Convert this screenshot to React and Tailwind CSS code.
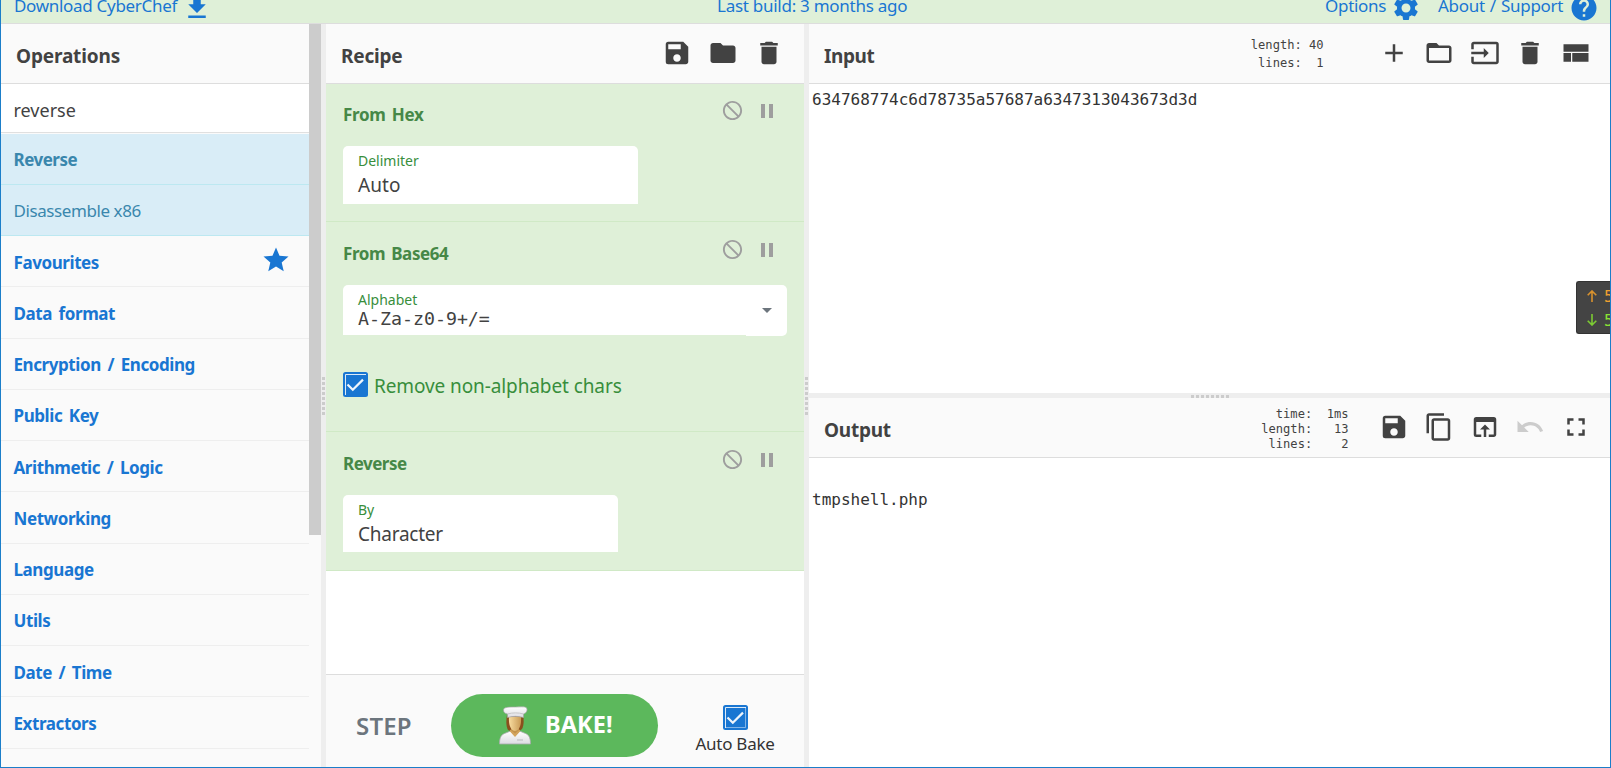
import React, { useState } from 'react';
import clsx from 'clsx';
import {
  MdSave, MdFolder, MdDelete, MdAdd, MdInput, MdContentCopy,
  MdOpenInBrowser, MdUndo, MdFullscreen, MdSettings, MdHelp, MdStar, MdPause,
} from 'react-icons/md';

const categories = [
  'Favourites', 'Data format', 'Encryption / Encoding', 'Public Key', 'Arithmetic / Logic',
  'Networking', 'Language', 'Utils', 'Date / Time', 'Extractors',
];

function Glyph({ d, className }) {
  return (
    <svg viewBox="0 0 24 24" fill="currentColor" className={clsx('shrink-0', className)}>
      <path d={d} />
    </svg>
  );
}

const DOWNLOAD = 'M19 9h-4V3H9v6H5l7 7 7-7zM5 18v2h14v-2H5z';
const FOLDER_OUTLINE = 'M20 6h-8l-2-2H4c-1.1 0-1.99.9-1.99 2L2 18c0 1.1.9 2 2 2h16c1.1 0 2-.9 2-2V8c0-1.1-.9-2-2-2zm0 12H4V8h16v10z';
const LAYOUT = 'M2 19h6v-7H2v7zm7 0h13v-7H9v7zM2 5v6h20V5H2z';
const BLOCK = 'M12 2C6.48 2 2 6.48 2 12s4.48 10 10 10 10-4.48 10-10S17.52 2 12 2zm0 18c-4.42 0-8-3.58-8-8 0-1.85.63-3.55 1.69-4.9L16.9 18.31C15.55 19.37 13.85 20 12 20zm6.31-3.1L7.1 5.69C8.45 4.63 10.15 4 12 4c4.42 0 8 3.58 8 8 0 1.85-.63 3.55-1.69 4.9z';

function Checkbox({ checked, onChange, closed }) {
  return (
    <button onClick={() => onChange(!checked)} className="block w-[25px] h-[25px] shrink-0">
      <svg viewBox="0 0 25 25" className="block w-full h-full">
        <rect width="25" height="25" rx="2.5" fill="#1976d2" />
        <path d="M2.5 23V2.5H23" fill="none" stroke="#fff" strokeWidth="1" opacity=".85" />
        {closed && <path d="M2.5 22.5h20v-20" fill="none" stroke="#fff" strokeWidth="1" opacity=".45" />}
        {checked && <path d="M4.5 12.5l5.3 5.3L20 7.6" fill="none" stroke="#fff" strokeWidth="2.2" opacity=".93" />}
      </svg>
    </button>
  );
}

function Chef() {
  return (
    <svg viewBox="0 0 32 39" className="w-8 h-[39px] shrink-0 -mt-px">
      <defs>
        <linearGradient id="coat" x1="0" y1="0" x2="0" y2="1">
          <stop offset="0" stopColor="#fff" />
          <stop offset="1" stopColor="#dcdce2" />
        </linearGradient>
        <linearGradient id="face" x1="0" y1="0" x2="1" y2="0">
          <stop offset="0" stopColor="#f8dca0" />
          <stop offset="1" stopColor="#c99a55" />
        </linearGradient>
      </defs>
      <path d="M8 9c-1 6-1 11 1 15l5 2h5l4-3c2-4 2-9 1-14z" fill="#8a4f1d" />
      <path d="M12 20h8v8l-4 4-4-4z" fill="#c4934d" />
      <path d="M.5 38c0-5 1-9 5-10.500l6-2.500 4.500 5 4.500-5 6 2.500c4 1.500 5 5.500 5 10.500z" fill="url(#coat)" stroke="#a9a9ad" strokeWidth=".8" />
      <path d="M11 25.500l5 5.500 5-5.500v-2l-5 4-5-4z" fill="#d3a45e" />
      <path d="M10 11h12c.5 7-1 13-6 14-5-1-6.500-7-6-14z" fill="url(#face)" />
      <path d="M18 34h6" stroke="#b9b9be" strokeWidth="1" />
      <path d="M4.500 4c0-3 6-3 12-3s11-1 11.500 2-2 4.500-3.500 5v3.500c-5-1.500-11-1.500-16 0V8C6 7.500 4.500 6.500 4.500 4z" fill="url(#coat)" stroke="#a5a5a5" strokeWidth=".7" />
      <path d="M8.500 8c5-1.500 11-1.500 16 0" stroke="#bdbdbd" strokeWidth=".8" fill="none" />
    </svg>
  );
}

function Gutter({ horizontal }) {
  return (
    <div className={clsx('shrink-0 bg-[#eee] flex items-center justify-center', horizontal ? 'h-[5px] pt-[2px]' : 'w-[5px] flex-col pt-px')}>
      <div className={clsx('flex gap-[2px]', !horizontal && 'flex-col')}>
        {Array.from({ length: 8 }, (_, i) => (
          <span key={i} className="block w-[3px] h-[3px] bg-[#ccc]" />
        ))}
      </div>
    </div>
  );
}

function PaneHeader({ title, titleClass, stats, children }) {
  return (
    <div className="h-[60px] shrink-0 bg-[#fafafa] border-b border-[#ddd] flex items-center pl-[15px] text-[#424242]">
      <h2 className={clsx('text-[19px] leading-6 font-bold pt-[5px] flex-1', titleClass)}>{title}</h2>
      {stats}
      <div className="flex items-center pb-[1px]">{children}</div>
    </div>
  );
}

function Operation({ name, nameClass, className, headClass, children }) {
  return (
    <div className={clsx('bg-[#dff0d8] border-b border-[#d0e9c6] px-[17px]', className)}>
      <div className={clsx('flex', headClass)}>
        <h3 className={clsx('flex-1 text-[17px] leading-8 font-bold text-[#468847]', nameClass)}>{name}</h3>
        <div className="flex items-center h-[23px] gap-[11px] pr-[8px] text-[#9e9e9e]">
          <Glyph d={BLOCK} className="w-[23px] h-[23px]" />
          <MdPause className="w-[24px] h-[24px]" />
        </div>
      </div>
      {children}
    </div>
  );
}

function App() {
  const [query, setQuery] = useState('reverse');
  const [strip, setStrip] = useState(true);
  const [autoBake, setAutoBake] = useState(true);

  return (
    <div className="w-[1611px] h-[768px] overflow-hidden relative flex flex-col border-x border-b border-[#1b7ec9] bg-white font-['Noto_Sans',sans-serif] text-[#424242]">
      {/* Banner */}
      <header className="h-6 shrink-0 overflow-hidden bg-[#dff0d8] border-b border-[#ddd] text-[#1976d2] text-[17px]">
        <div className="h-10 -mt-3 flex items-center justify-between pl-[13px] pr-[11px]">
          <div className="flex items-center w-[600px] gap-[4px]">
            <span className="w-[164px] whitespace-nowrap tracking-[-0.3px] -mt-[5px]">Download CyberChef</span>
            <Glyph d={DOWNLOAD} className="w-[30px] h-[30px]" />
          </div>
          <span className="whitespace-nowrap w-[190px] ml-[11px] tracking-[-0.27px] -mt-[5px]">Last build: 3 months ago</span>
          <div className="flex items-center justify-end w-[600px]">
            <span className="whitespace-nowrap w-[63px] tracking-[-0.3px] -mt-[5px]">Options</span>
            <MdSettings className="w-[30px] h-[30px] mr-[17px] ml-[3px] shrink-0" />
            <span className="whitespace-nowrap w-[128px] tracking-[-0.3px] [word-spacing:1px] -mt-[5px]">About / Support</span>
            <MdHelp className="w-[30px] h-[30px] ml-[3px] shrink-0" />
          </div>
        </div>
      </header>

      <main className="flex-1 min-h-0 flex">
        {/* Operations */}
        <section className="w-[320px] shrink-0 flex bg-[#fafafa] overflow-hidden">
          <div className="w-[308px]">
            <PaneHeader title="Operations" titleClass="tracking-[-0.15px]" />
            <input
              value={query}
              onChange={(e) => setQuery(e.target.value)}
              className="block w-full h-[49px] bg-white border-b border-[#e0e0e0] pl-[12.5px] pt-[3px] text-[18px] tracking-[0px] outline-none"
            />
            <ul className="pt-[0.65px] text-[17px]">
              <li className="h-[51.25px] pl-[12.5px] pt-[2px] flex items-center bg-[#d9edf7] border-b border-[#bce8f1] text-[#3a87ad] font-bold tracking-[-0.5px]">Reverse</li>
              <li className="h-[51.25px] pl-[12.5px] pt-px flex items-center bg-[#d9edf7] border-b border-[#bce8f1] text-[#3a87ad] tracking-[-0.42px]">Disassemble x86</li>
              {categories.map((name) => (
                <li key={name} className="h-[51.25px] pl-[12.5px] pr-[18px] flex items-center justify-between border-b border-[#eee] text-[#1976d2] font-bold tracking-[-0.42px] [word-spacing:2.6px]">
                  <span className="pt-[2px]">{name}</span>
                  {name === 'Favourites' && <MdStar className="w-[30px] h-[30px] -mt-[2px]" />}
                </li>
              ))}
            </ul>
          </div>
          <div className="w-3 h-[511px] bg-[#ccc]" />
        </section>
        <Gutter />

        {/* Recipe */}
        <section className="w-[478px] shrink-0 flex flex-col bg-white">
          <PaneHeader title="Recipe" titleClass="tracking-[-0.2px]">
            <div className="flex gap-4 pr-5">
              <MdSave className="w-[30px] h-[30px]" />
              <MdFolder className="w-[30px] h-[30px]" />
              <MdDelete className="w-[30px] h-[30px]" />
            </div>
          </PaneHeader>
          <div className="flex-1">
            <Operation name="From Hex" nameClass="tracking-[-0.3px] [word-spacing:2px]" headClass="h-[62px] pt-[15px]" className="h-[138px]">
              <div className="w-[295px] h-[58px] bg-white rounded-t-[5px] pl-[15px] pt-[5px]">
                <div className="text-[14px] leading-5 text-[#388e3c] tracking-[0px]">Delimiter</div>
                <div className="text-[19px] leading-[29px] tracking-[0.1px]">Auto</div>
              </div>
            </Operation>
            <Operation name="From Base64" nameClass="tracking-[-0.4px] [word-spacing:2px]" headClass="h-[63px] pt-[16px]" className="h-[210px]">
              <div className="flex">
                <div className="flex-1 h-[50px] bg-white rounded-tl-[5px] pl-[15px] pt-[5px]">
                  <div className="text-[14px] leading-5 text-[#388e3c] tracking-[0px]">Alphabet</div>
                  <div className="font-['DejaVu_Sans_Mono',monospace] text-[18.25px] leading-[18px]">A-Za-z0-9+/=</div>
                </div>
                <div className="w-[41px] h-[51px] bg-white rounded-r-[5px] flex items-center justify-center">
                  <span className="border-x-[5.5px] border-x-transparent border-t-[5.5px] border-t-[#6c757d]" />
                </div>
              </div>
              <div className="flex items-start gap-[6px] mt-9">
                <Checkbox checked={strip} onChange={setStrip} />
                <span className="text-[19px] leading-[25px] pt-[2px] text-[#388e3c] tracking-[-0.1px]">Remove non-alphabet chars</span>
              </div>
            </Operation>
            <Operation name="Reverse" nameClass="tracking-[-0.5px]" headClass="h-[63px] pt-[16px]" className="h-[139px]">
              <div className="w-[275px] h-[57px] bg-white rounded-t-[5px] pl-[15px] pt-[5px]">
                <div className="text-[14px] leading-5 text-[#388e3c] tracking-[-0.2px]">By</div>
                <div className="text-[19px] leading-[29px] tracking-[-0.25px]">Character</div>
              </div>
            </Operation>
          </div>
          <div className="h-[93px] shrink-0 bg-[#fafafa] border-t border-[#ddd] flex items-start">
            <button className="w-[125px] pl-[30px] pt-[33px] text-left text-[24px] leading-9 font-semibold text-[#6c757d] tracking-[0.2px]">STEP</button>
            <button className="w-[207px] h-[63px] mt-[19px] rounded-full bg-[#5cb85c] text-white flex items-center pl-12 gap-[14px]">
              <Chef />
              <span className="text-[23.5px] leading-8 font-bold tracking-[0.1px] -mt-[4px]">BAKE!</span>
            </button>
            <div className="ml-[37px] pt-[30px] flex flex-col items-center w-[80px]">
              <Checkbox checked={autoBake} onChange={setAutoBake} closed />
              <span className="text-[17px] leading-6 mt-[2px] whitespace-nowrap tracking-[-0.25px] text-[#333]">Auto Bake</span>
            </div>
          </div>
        </section>
        <Gutter />

        {/* Input / Output */}
        <section className="flex-1 min-w-0 flex flex-col">
          <PaneHeader
            title="Input"
            titleClass="tracking-[-0.4px]"
            stats={<pre className="w-[90px] mr-[55px] text-right font-['DejaVu_Sans_Mono',monospace] text-[12.1px] leading-[18px] pt-px">{'length: 40\nlines:  1'}</pre>}
          >
            <div className="flex gap-[15.6px] pr-[19px]">
              <MdAdd className="w-[30px] h-[30px]" />
              <Glyph d={FOLDER_OUTLINE} className="w-[30px] h-[30px]" />
              <MdInput className="w-[30px] h-[30px]" />
              <MdDelete className="w-[30px] h-[30px]" />
              <Glyph d={LAYOUT} className="w-[30px] h-[30px]" />
            </div>
          </PaneHeader>
          <div className="h-[309px] shrink-0 pl-[3px] pt-[5px] font-['DejaVu_Sans_Mono',monospace] text-[16px] leading-[22px] text-[#333]">
            634768774c6d78735a57687a6347313043673d3d
          </div>
          <Gutter horizontal />
          <PaneHeader
            title="Output"
            titleClass="tracking-[-0.25px]"
            stats={<pre className="w-[100px] mr-[30px] text-right font-['DejaVu_Sans_Mono',monospace] text-[12.1px] leading-[15px] pt-[4px]">{'time:  1ms\nlength:   13\nlines:    2'}</pre>}
          >
            <div className="flex gap-[15.6px] pr-[19px]">
              <MdSave className="w-[30px] h-[30px]" />
              <MdContentCopy className="w-[30px] h-[30px]" />
              <MdOpenInBrowser className="w-[30px] h-[30px]" />
              <MdUndo className="w-[30px] h-[30px] text-[#ccc]" />
              <MdFullscreen className="w-[30px] h-[30px]" />
            </div>
          </PaneHeader>
          <pre className="flex-1 pl-[3px] pt-[9px] font-['DejaVu_Sans_Mono',monospace] text-[16px] leading-[22px] text-[#333]">
            {'\ntmpshell.php'}
          </pre>
        </section>
      </main>

      {/* Network speed widget docked on the right edge */}
      <div className="absolute left-[1575px] top-[281px] w-[34px] h-[53px] overflow-hidden bg-[#444] border border-r-0 border-[#333] rounded-l-[3px] pl-[10px] pt-[2px] font-['DejaVu_Sans_Mono',monospace] text-[16px] leading-[23.500px]">
        <div className="flex items-center gap-[7px] text-[#f0a030]">
          <svg viewBox="0 0 10 12" className="w-[10px] h-3 shrink-0 -mt-px" fill="none" stroke="#d9922e" strokeWidth="1.6"><path d="M5 12V1M.7 5.300L5 1l4.300 4.300" /></svg>
          <span className="pt-px">5</span>
        </div>
        <div className="flex items-center gap-[7px] text-[#8ae234]">
          <svg viewBox="0 0 10 12" className="w-[10px] h-3 shrink-0 -mt-px" fill="none" stroke="#7ccb33" strokeWidth="1.6"><path d="M5 0v11M.7 6.700L5 11l4.300-4.300" /></svg>
          <span>5</span>
        </div>
      </div>
    </div>
  );
}

export default App;
